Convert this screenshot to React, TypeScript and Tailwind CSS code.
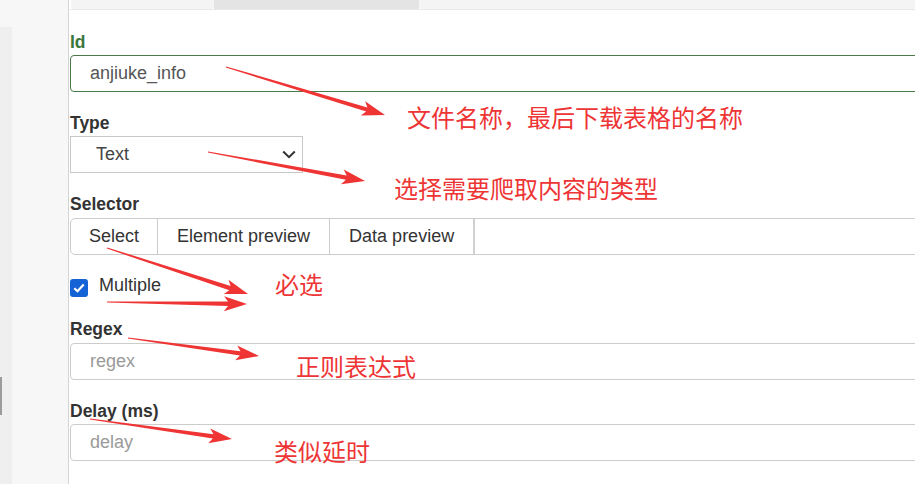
import React from "react";

type Arrow = { x1: number; y1: number; x2: number; y2: number };

const arrows: Arrow[] = [
  { x1: 226, y1: 67, x2: 385, y2: 115 },
  { x1: 208, y1: 152, x2: 365, y2: 181 },
  { x1: 107, y1: 248, x2: 248, y2: 294 },
  { x1: 107, y1: 302, x2: 247, y2: 304 },
  { x1: 128, y1: 338, x2: 259, y2: 356 },
  { x1: 90, y1: 419, x2: 232, y2: 439 },
];

// screenshot-tool style arrow: thin tail, widening shaft, notched head
function arrowPoints({ x1, y1, x2, y2 }: Arrow) {
  const dx = x2 - x1;
  const dy = y2 - y1;
  const len = Math.hypot(dx, dy);
  const ux = dx / len;
  const uy = dy / len;
  const nx = -uy;
  const ny = ux;
  const head = 19;
  const back = 4;
  const hw = 7.5;
  const sw = 2.2;
  const tail = 0.6;
  const bx = x2 - ux * head;
  const by = y2 - uy * head;
  const pts = [
    [x1 + nx * tail, y1 + ny * tail],
    [bx + nx * sw, by + ny * sw],
    [bx - ux * back + nx * hw, by - uy * back + ny * hw],
    [x2, y2],
    [bx - ux * back - nx * hw, by - uy * back - ny * hw],
    [bx - nx * sw, by - ny * sw],
    [x1 - nx * tail, y1 - ny * tail],
  ];
  return pts.map((p) => `${p[0].toFixed(1)},${p[1].toFixed(1)}`).join(" ");
}

const notes = [
  { text: "文件名称，最后下载表格的名称", cls: "left-[407px] top-[105px]" },
  { text: "选择需要爬取内容的类型", cls: "left-[394px] top-[176px]" },
  { text: "必选", cls: "left-[275px] top-[272px]" },
  { text: "正则表达式", cls: "left-[296px] top-[354px]" },
  { text: "类似延时", cls: "left-[274px] top-[439px]" },
];

export default function App() {
  return (
    <div className="relative flex h-[484px] w-[915px] overflow-hidden bg-white font-['Liberation_Sans',Arial,sans-serif]">
      {/* left sidebar */}
      <div className="flex h-full w-[69px] shrink-0 border-r border-[#d4d4d4] bg-[#f7f7f7]">
        <div className="mt-[27px] flex h-full w-[12px] flex-col bg-[#efefef]">
          <div className="mt-[350px] h-[38px] w-[2px] bg-[#9c9c9c]" />
        </div>
      </div>

      {/* form panel */}
      <div className="flex min-w-0 flex-1 flex-col pl-[1px] text-[18px] text-[#333]">
        <div className="flex h-[10px] shrink-0 border-b border-[#e8e8e8]">
          <div className="ml-[1px] w-[143px] rounded-b-[4px] bg-[#f4f4f4]" />
          <div className="w-[205px] bg-[#e4e4e4]" />
          <div className="flex-1 rounded-bl-[4px] bg-[#f4f4f4]" />
        </div>

        <label className="mt-[22px] mb-[3px] text-[17.5px] font-bold leading-[20px] text-[#3c763d]">Id</label>
        <input
          readOnly
          value="anjiuke_info"
          className="h-[37px] w-[880px] shrink-0 rounded-[4px] border border-[#4a7a4a] px-[19px] text-[#555] outline-none"
        />

        <label className="mt-[21px] mb-[3px] text-[17.5px] font-bold leading-[20px]">Type</label>
        <div className="flex h-[37px] w-[233px] shrink-0 items-center justify-between border border-[#c8c8c8] pl-[25px] pr-[6px] text-[#444]">
          <span>Text</span>
          <svg width="14" height="9" viewBox="0 0 14 9" fill="none">
            <polyline points="1.2,1.5 7,7.2 12.8,1.5" stroke="#333" strokeWidth="2" />
          </svg>
        </div>

        <label className="mt-[21px] mb-[4px] text-[17.5px] font-bold leading-[20px]">Selector</label>
        <div className="flex h-[37px] w-[880px] shrink-0 rounded-l-[5px] border border-[#cccccc] bg-white">
          <div className="flex items-center border-r border-[#cccccc] px-[18px]">Select</div>
          <div className="flex items-center border-r border-[#cccccc] px-[19px]">Element preview</div>
          <div className="flex items-center border-r-2 border-[#d0d0d0] px-[19px]">Data preview</div>
          <div className="flex-1" />
        </div>

        <div className="mt-[24px] flex h-[18px] items-center">
          <span className="flex h-[18px] w-[18px] items-center justify-center rounded-[3px] bg-[#1463d6]">
            <svg width="12" height="10" viewBox="0 0 12 10" fill="none">
              <polyline points="1.3,5.2 4.5,8.2 10.7,1.6" stroke="#fff" strokeWidth="2.2" />
            </svg>
          </span>
          <span className="mb-[6px] ml-[11px] leading-[20px]">Multiple</span>
        </div>

        <label className="mt-[22px] mb-[4px] text-[17.5px] font-bold leading-[20px]">Regex</label>
        <input
          placeholder="regex"
          className="h-[37px] w-[880px] shrink-0 rounded-[4px] border border-[#cccccc] px-[19px] text-[#555] outline-none placeholder:text-[#9a9a9a]"
        />

        <label className="mt-[21px] mb-[3px] text-[17.5px] font-bold leading-[20px]">Delay (ms)</label>
        <input
          placeholder="delay"
          className="h-[37px] w-[880px] shrink-0 rounded-[4px] border border-[#cccccc] px-[19px] text-[#555] outline-none placeholder:text-[#9a9a9a]"
        />
      </div>

      {/* red annotations drawn over the form */}
      <div className="pointer-events-none absolute inset-0">
        <svg className="absolute inset-0" width="915" height="484">
          {arrows.map((a, i) => (
            <polygon key={i} points={arrowPoints(a)} fill="#ef3434" />
          ))}
        </svg>
        {notes.map((n) => (
          <span
            key={n.text}
            className={`absolute whitespace-nowrap font-['Noto_Sans_CJK_SC','Microsoft_YaHei',sans-serif] text-[24px] leading-[24px] text-[#ee3535] ${n.cls}`}
          >
            {n.text}
          </span>
        ))}
      </div>
    </div>
  );
}
